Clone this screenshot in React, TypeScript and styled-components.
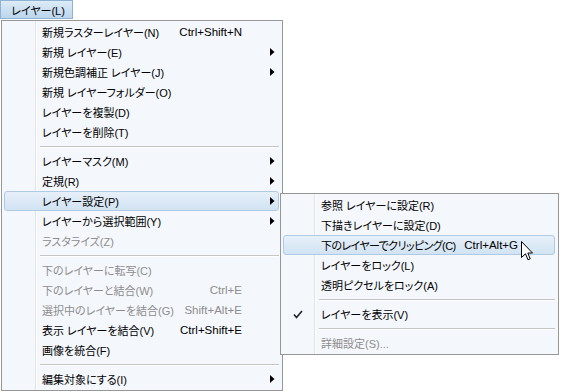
import React from "react";
import styled, { createGlobalStyle } from "styled-components";

const GlobalStyle = createGlobalStyle`
  body {
    margin: 0;
    background: #fff;
    font-family: "Liberation Sans", "Noto Sans CJK JP", sans-serif;
    font-size: 11px;
    font-feature-settings: "palt";
  }
`;

const Page = styled.div`
  position: relative;
  width: 561px;
  height: 392px;
  overflow: hidden;
`;

const MenuBar = styled.div`
  display: flex;
  height: 20px;
`;

const MenuBarButton = styled.div`
  box-sizing: border-box;
  width: 73px;
  height: 19px;
  display: flex;
  align-items: center;
  justify-content: center;
  padding-left: 3px;
  border: 1px solid #8fb1d4;
  background: linear-gradient(#dcebf7, #bcd6ec);
  color: #000;
`;

const Menu = styled.div`
  box-sizing: border-box;
  display: flex;
  flex-direction: column;
  padding: 1px 0;
  border: 1px solid #979797;
  background:
    linear-gradient(
      to right,
      transparent 33px,
      #e2e3e3 33px,
      #e2e3e3 34px,
      #fff 34px,
      #fff 35px,
      transparent 35px
    ),
    #f4f7fc;
`;

const MainMenu = styled(Menu)`
  width: 282px;
  margin-left: 1px;
`;

const SubMenu = styled(Menu)`
  position: absolute;
  left: 280px;
  top: 193px;
  width: 279px;
`;

const Item = styled.div<{ $active?: boolean; $disabled?: boolean }>`
  box-sizing: border-box;
  display: grid;
  grid-template-columns: 37px minmax(0, 1fr) auto 36px;
  align-items: center;
  height: 20px;
  margin: 0 3px 0 2px;
  border: 1px solid ${(p) => (p.$active ? "#aecbe3" : "transparent")};
  border-radius: 3px;
  background: ${(p) => (p.$active ? "linear-gradient(#e7f0f9, #d1e3f3)" : "none")};
  color: ${(p) => (p.$disabled ? "#8d8d8d" : "#000")};
  white-space: nowrap;
`;

const Gutter = styled.div`
  display: flex;
  align-items: center;
  padding-left: 9px;
`;

const Label = styled.span<{ $tight?: boolean }>`
  letter-spacing: ${(p) => (p.$tight ? "-0.6px" : "0")};
`;

const Shortcut = styled.span`
  text-align: right;
  padding-left: 8px;
  font-size: 11.5px;
`;

const ArrowCell = styled.div`
  display: flex;
  align-items: center;
  padding-left: 28px;
`;

const Separator = styled.div`
  display: flex;
  align-items: center;
  height: 9px;
  margin: 0 3px 0 38px;

  &::after {
    content: "";
    flex: 1;
    height: 1px;
    background: #c5c5c5;
    box-shadow: 0 1px 0 #fff;
  }
`;

const Cursor = styled.svg`
  position: absolute;
  left: 521px;
  top: 241px;
`;

type Entry =
  | { sep: true }
  | {
      sep?: false;
      label: string;
      shortcut?: string;
      sub?: boolean;
      disabled?: boolean;
      active?: boolean;
      checked?: boolean;
      tight?: boolean;
    };

const mainItems: Entry[] = [
  { label: "新規ラスターレイヤー(N)", shortcut: "Ctrl+Shift+N" },
  { label: "新規 レイヤー(E)", sub: true },
  { label: "新規色調補正 レイヤー(J)", sub: true },
  { label: "新規 レイヤーフォルダー(O)" },
  { label: "レイヤーを複製(D)" },
  { label: "レイヤーを削除(T)" },
  { sep: true },
  { label: "レイヤーマスク(M)", sub: true },
  { label: "定規(R)", sub: true },
  { label: "レイヤー設定(P)", sub: true, active: true },
  { label: "レイヤーから選択範囲(Y)", sub: true },
  { label: "ラスタライズ(Z)", disabled: true },
  { sep: true },
  { label: "下のレイヤーに転写(C)", disabled: true },
  { label: "下のレイヤーと結合(W)", shortcut: "Ctrl+E", disabled: true },
  { label: "選択中のレイヤーを結合(G)", shortcut: "Shift+Alt+E", disabled: true },
  { label: "表示 レイヤーを結合(V)", shortcut: "Ctrl+Shift+E" },
  { label: "画像を統合(F)" },
  { sep: true },
  { label: "編集対象にする(I)", sub: true },
];

const subItems: Entry[] = [
  { label: "参照 レイヤーに設定(R)" },
  { label: "下描きレイヤーに設定(D)" },
  {
    label: "下のレイヤーでクリッピング(C)",
    shortcut: "Ctrl+Alt+G",
    active: true,
    tight: true,
  },
  { label: "レイヤーをロック(L)" },
  { label: "透明ピクセルをロック(A)" },
  { sep: true },
  { label: "レイヤーを表示(V)", checked: true },
  { sep: true },
  { label: "詳細設定(S)...", disabled: true },
];

const Arrow = () => (
  <svg width="5" height="8" viewBox="0 0 5 8">
    <polygon points="0,0 4.5,4 0,8" fill="#000" />
  </svg>
);

const Check = () => (
  <svg width="10" height="9" viewBox="0 0 10 9">
    <path d="M1 4.5 L3.5 7.5 L9 1" fill="none" stroke="#222" strokeWidth="1.6" />
  </svg>
);

const renderItems = (items: Entry[]) =>
  items.map((item, i) =>
    item.sep ? (
      <Separator key={i} />
    ) : (
      <Item key={i} $active={item.active} $disabled={item.disabled}>
        <Gutter>{item.checked && <Check />}</Gutter>
        <Label $tight={item.tight}>{item.label}</Label>
        <Shortcut>{item.shortcut}</Shortcut>
        <ArrowCell>{item.sub && <Arrow />}</ArrowCell>
      </Item>
    )
  );

const App = () => {
  return (
    <Page>
      <GlobalStyle />
      <MenuBar>
        <MenuBarButton>レイヤー(L)</MenuBarButton>
      </MenuBar>
      <MainMenu>{renderItems(mainItems)}</MainMenu>
      <SubMenu>{renderItems(subItems)}</SubMenu>
      <Cursor width="13" height="20" viewBox="0 0 13 20">
        <path
          d="M0.5 0.5 V16.5 L4.5 12.8 L7 18.8 L9.2 17.8 L6.8 12 H11.5 Z"
          fill="#fff"
          stroke="#000"
          strokeWidth="1"
        />
      </Cursor>
    </Page>
  );
};

export default App;
